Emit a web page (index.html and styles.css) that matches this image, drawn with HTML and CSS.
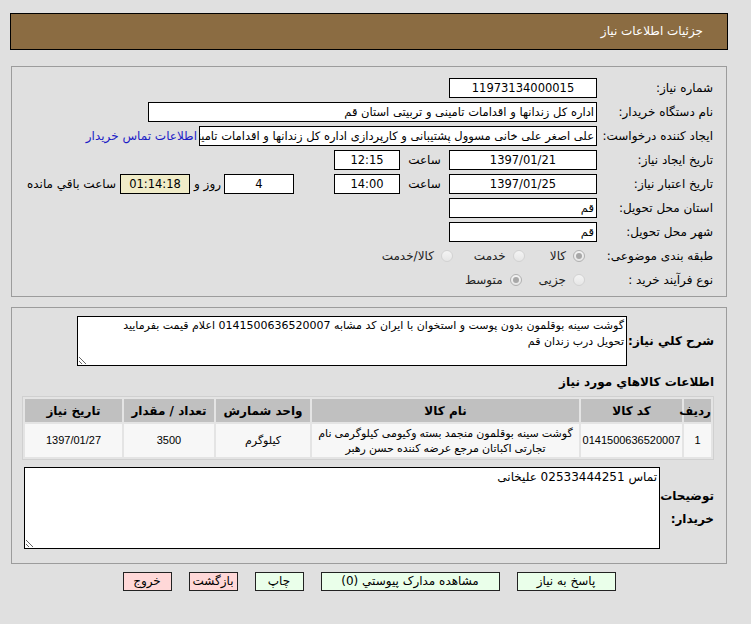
FILE: index.html
```html
<!DOCTYPE html>
<html lang="fa" dir="rtl">
<head>
<meta charset="utf-8">
<title>جزئیات اطلاعات نیاز</title>
<link rel="stylesheet" href="styles.css">
</head>
<body>
<div class="page">
  <div class="header">جزئیات اطلاعات نیاز</div>

  <div class="panel info">
    <div class="lbl">شماره نیاز:</div>
    <div class="val"><span class="box w148 center">11973134000015</span></div>

    <div class="lbl">نام دستگاه خریدار:</div>
    <div class="val"><span class="box w449">اداره کل زندانها و اقدامات تامینی و تربیتی استان قم</span></div>

    <div class="lbl">ایجاد کننده درخواست:</div>
    <div class="val"><span class="box w398">علی اصغر علی خانی مسوول پشتیبانی و کارپردازی اداره کل زندانها و اقدامات تامینی و تربیتی استان قم</span><a class="link" href="#">اطلاعات تماس خریدار</a></div>

    <div class="lbl">تاریخ ایجاد نیاز:</div>
    <div class="val"><span class="box w148 center">1397/01/21</span><span class="hour">ساعت</span><span class="box w66 center">12:15</span></div>

    <div class="lbl">تاریخ اعتبار نیاز:</div>
    <div class="val"><span class="box w148 center">1397/01/25</span><span class="hour">ساعت</span><span class="box w66 center">14:00</span><span class="box w70 center days">4</span><span class="txt-day">روز و</span><span class="box w70 center timer">01:14:18</span><span class="txt-remain">ساعت باقي مانده</span></div>

    <div class="lbl">استان محل تحویل:</div>
    <div class="val"><span class="box w148">قم</span></div>

    <div class="lbl">شهر محل تحویل:</div>
    <div class="val"><span class="box w148">قم</span></div>

    <div class="lbl">طبقه بندی موضوعی:</div>
    <div class="val radios"><span class="radio checked"></span><span class="rlabel r1">کالا</span><span class="radio"></span><span class="rlabel r2">خدمت</span><span class="radio"></span><span class="rlabel">کالا/خدمت</span></div>

    <div class="lbl">نوع فرآیند خرید :</div>
    <div class="val radios"><span class="radio"></span><span class="rlabel r3">جزیی</span><span class="radio checked"></span><span class="rlabel">متوسط</span></div>
  </div>

  <div class="panel details">
    <div class="desc-row">
      <div class="blabel desc-label">شرح کلي نیاز:</div>
      <textarea class="desc" readonly>گوشت سینه بوقلمون بدون پوست و استخوان با ایران کد مشابه 0141500636520007 اعلام قیمت بفرمایید
تحویل درب زندان قم</textarea>
    </div>

    <div class="section-title">اطلاعات کالاهاي مورد نیاز</div>

    <table class="goods">
      <colgroup>
        <col class="c-row"><col class="c-code"><col class="c-name"><col class="c-unit"><col class="c-qty"><col class="c-date">
      </colgroup>
      <thead>
        <tr><th>ردیف</th><th>کد کالا</th><th>نام کالا</th><th>واحد شمارش</th><th>تعداد / مقدار</th><th>تاریخ نیاز</th></tr>
      </thead>
      <tbody>
        <tr><td>1</td><td>0141500636520007</td><td>گوشت سینه بوقلمون منجمد بسته وکیومی کیلوگرمی نام تجارتی اکباتان مرجع عرضه کننده حسن رهبر</td><td>کیلوگرم</td><td>3500</td><td>1397/01/27</td></tr>
      </tbody>
    </table>

    <div class="notes-row">
      <div class="blabel notes-label">توضیحات خریدار:</div>
      <textarea class="notes" readonly>تماس 02533444251 علیخانی</textarea>
    </div>
  </div>

  <div class="buttons">
    <button class="btn green w99">پاسخ به نیاز</button>
    <button class="btn green w179">مشاهده مدارک پیوستي (0)</button>
    <button class="btn green w49">چاپ</button>
    <button class="btn pink w49">بازگشت</button>
    <button class="btn pink w49">خروج</button>
  </div>
</div>
</body>
</html>
```

FILE: styles.css
```css
* { box-sizing: border-box; }

html, body {
  margin: 0;
  padding: 0;
  background: #e0e0e0;
}

body {
  direction: rtl;
  font-family: "DejaVu Sans", "Liberation Sans", sans-serif;
  font-size: 12px;
  color: #000;
}

.page {
  padding: 13px 23px 0 10px;
}

.header {
  height: 37px;
  background: #8b6c42;
  border: 1px solid #000;
  color: #fff;
  font-size: 12px;
  line-height: 35px;
  padding-right: 24px;
}

.panel {
  border: 1px solid #9c9c9c;
  margin: 16px 1px 0 1px;
}

/* ---------- info panel ---------- */
.info {
  display: grid;
  grid-template-columns: 116px 1fr;
  grid-auto-rows: 24px;
  align-items: center;
  padding: 9px 13px 4px 12px;
}

.lbl {
  white-space: nowrap;
  text-align: right;
}

.val {
  display: flex;
  align-items: center;
  white-space: nowrap;
}

.box {
  display: block;
  height: 20px;
  line-height: 18px;
  border: 1px solid #000;
  background: #fff;
  padding: 0 2px;
  overflow: hidden;
  white-space: nowrap;
  flex: none;
  font-size: 11.5px;
}

.center { text-align: center; }
.w148 { width: 148px; }
.w449 { width: 449px; }
.w398 { width: 398px; }
.w66 { width: 66px; }
.w70 { width: 70px; }

.link {
  color: #1c1cc6;
  text-decoration: none;
  margin-right: 2px;
}

.hour {
  width: 49px;
  text-align: center;
  color: #000;
}

.days { margin-right: 40px; }
.txt-day { margin: 0 3px 0 4px; }
.timer { background: #f0ecc8; }
.txt-remain { margin-right: 4px; }

.radios { padding-right: 12px; }

.radio {
  width: 12px;
  height: 12px;
  border-radius: 50%;
  border: 1px solid #d2d2d2;
  background: linear-gradient(#f4f4f4, #e6e6e6);
  position: relative;
  flex: none;
}

.radio.checked {
  border-color: #b0b0b0;
}

.radio.checked::after {
  content: "";
  position: absolute;
  left: 2px;
  top: 2px;
  width: 6px;
  height: 6px;
  border-radius: 50%;
  background: #a8a8a8;
}

.rlabel {
  margin-right: 7px;
  color: #222;
}

.r1 { margin-left: 25px; }
.r2 { margin-left: 21px; }
.r3 { margin-left: 17px; }

/* ---------- details panel ---------- */
.details {
  margin-top: 10px;
  padding: 8px 12px 14px 11px;
}

.blabel {
  font-weight: bold;
  font-size: 12px;
}

.desc-row {
  display: flex;
  align-items: center;
}

.desc-label {
  width: 87px;
  text-align: right;
  white-space: nowrap;
}

textarea {
  font-family: "DejaVu Sans", "Liberation Sans", sans-serif;
  font-size: 12px;
  border: 1px solid #000;
  background: #fff;
  padding: 1px 2px;
  margin: 0;
  direction: rtl;
  color: #000;
  line-height: 16px;
}

.desc {
  width: 550px;
  height: 50px;
  font-size: 11px;
}

.section-title {
  font-weight: bold;
  line-height: 16px;
  margin-top: 8px;
}

.goods {
  margin-top: 6px;
  width: 691px;
  table-layout: fixed;
  border-collapse: separate;
  border-spacing: 2px;
  border: 1px solid #d0d0d0;
  background: #e4e4e4;
}

.c-row { width: 27px; }
.c-code { width: 101px; }
.c-name { width: 267px; }
.c-unit { width: 94px; }
.c-qty { width: 90px; }
.c-date { width: 97px; }

.goods th {
  background: #c0c0c0;
  height: 23px;
  font-weight: bold;
  padding: 0;
  text-align: center;
}

.goods td {
  background: #f7f7f7;
  height: 33px;
  padding: 0 1px;
  text-align: center;
  line-height: 15px;
  font-family: "Liberation Sans", "DejaVu Sans", sans-serif;
  font-size: 11px;
}

.notes-row {
  display: flex;
  align-items: center;
  margin-top: 7px;
}

.notes-label {
  width: 54px;
  padding-right: 0;
  line-height: 23px;
  text-align: right;
}

.notes {
  width: 636px;
  height: 82px;
}

/* ---------- buttons ---------- */
.buttons {
  display: flex;
  justify-content: center;
  gap: 17px;
  margin-top: 8px;
}

.btn {
  height: 19px;
  border: 1px solid #222;
  font-family: "DejaVu Sans", "Liberation Sans", sans-serif;
  font-size: 12px;
  padding: 0;
  line-height: 17px;
  color: #000;
}

.green { background: #eaffea; }
.pink { background: #ffd8d8; }
.w49 { width: 49px; }
.w99 { width: 99px; }
.w179 { width: 179px; }
```
